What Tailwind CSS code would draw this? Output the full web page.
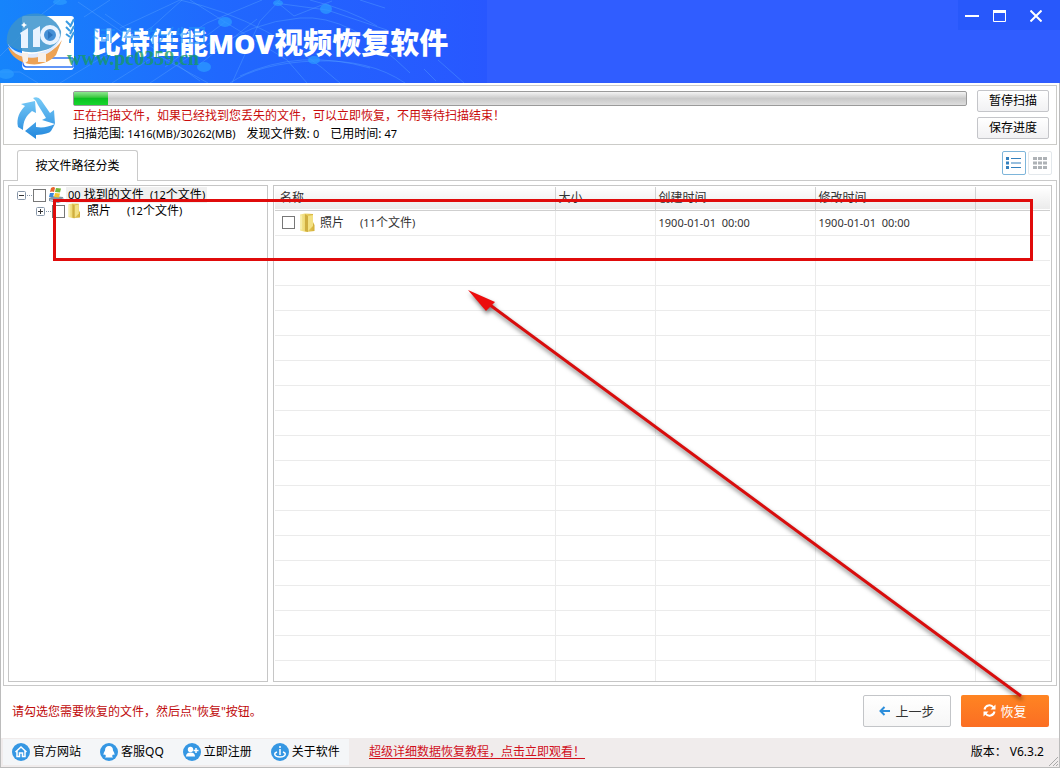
<!DOCTYPE html>
<html lang="zh-CN">
<head>
<meta charset="utf-8">
<title>比特佳能MOV视频恢复软件</title>
<script src="https://cdn.jsdelivr.net/npm/@tailwindcss/browser@4"></script>
</head>
<body class="relative flex h-screen flex-col overflow-hidden bg-white font-['Noto_Sans','Noto_Sans_CJK_SC',sans-serif] text-xs leading-4 text-black">

<svg class="absolute h-0 w-0" aria-hidden="true">
  <defs>
    <linearGradient id="gold" x1="0" x2="1"><stop offset="0" stop-color="#f6ea9c"/><stop offset=".4" stop-color="#ecd56b"/><stop offset="1" stop-color="#d3ae35"/></linearGradient>
    <linearGradient id="sky" gradientUnits="userSpaceOnUse" x1="0" y1="0" x2="0" y2="42"><stop offset="0" stop-color="#7accf7"/><stop offset="1" stop-color="#2287dd"/></linearGradient>
    <symbol id="folder" viewBox="0 0 16 20">
      <path d="M1 1.500 6 .5 14 1v8l1.500 3V18L7 19 1 17.500z" fill="url(#gold)"/>
      <path d="M6 1 9 3v16l-3-1z" fill="#cfae40"/><path d="M9 3l5-1v11l-5 5z" fill="#f3e184"/>
      <path d="M2 2.500v14" stroke="#fcf6c4"/>
    </symbol>
  </defs>
</svg>

<header class="relative flex h-[83px] shrink-0 items-start justify-between bg-[#305dff]">
  <div class="relative flex h-full w-[487px] items-center overflow-hidden bg-linear-to-r from-[#1684fb] via-[#2068fe] via-45% to-[#2857ff]">
    <svg class="absolute inset-0 h-full w-full" viewBox="0 0 487 83" fill="none" stroke="#5aa4ff" stroke-opacity=".4">
      <path d="M0 56 42 14 60 0M78 2l70 48 60 33M84 17l26-17M120 28l60-28M105 14l95 67M0 72h20l18 11M60 83l92-56 30-27M112 83l95-60L262 0M190 0l35 22-60 45M225 22l62 38 20 23M232 83l28-62 20-21M278 3l16 13M294 16l38-15M200 64l57-45M150 83l60-40M275 3l52 7 60 20"/>
      <path d="M180 0q90 20 160 83M230 83q30-20 85-22t90 22M210 52q40-30 90-34t110 55M310 0q40 10 67 26M424 69l12 12M438 60l26 23M385 8 360 0M240 76q60-28 130-8"/>
      <g fill="#2c9dff" fill-opacity=".7" stroke="none"><ellipse cx="60" cy="2" rx="7" ry="3"/><ellipse cx="225" cy="22" rx="7" ry="5"/><ellipse cx="326" cy="9" rx="6" ry="5"/><ellipse cx="204" cy="67" rx="7" ry="5"/><ellipse cx="6" cy="74" rx="8" ry="5"/><ellipse cx="314" cy="60" rx="6" ry="4"/><ellipse cx="278" cy="3" rx="5" ry="3"/></g>
    </svg>
    <svg class="relative ml-1 h-[60px] w-[76px] shrink-0" viewBox="4 11 76 60">
      <path d="M24 15h47q3 0 3 3v45q0 6-3 6H26q-4 0-4-6V18q0-3 2-3z" fill="#fff"/>
      <path d="M73 57H27q-4 0-4 4.500t4 4.500h46" fill="#fff" stroke="#2f74f5" stroke-width="1.500"/>
      <path d="M73 57v9" stroke="#2f74f5" stroke-width="1.500"/>
      <path d="M7 43a28 27 0 0 1 54-13q1 10-10 17-24 10-44-4z" fill="#3b93cc" fill-opacity=".85"/>
      <path d="M8 46a27 23 0 0 0 48 8l6-15c-10 17-38 22-54 7z" fill="#eda255"/>
      <path d="M7 40c3 16 42 20 54-5-6 26-48 30-54 5z" fill="#dfeaff"/>
      <path d="M20 32l8-5v20h-7V34zM33 29l7-4v21h-7z" fill="#e9f3ff"/>
      <circle cx="50" cy="34" r="8" fill="#4690d6" stroke="#e9f3ff" stroke-width="4"/><path d="M48 30l5 4-5 4z" fill="#2c72bb"/>
      <path d="M22 52h6v8l-4 3q-2-4-2-11zM38 52h8v9h-8z" fill="#f8efe8"/>
      <path d="m21 24 2-1 1-2 1 2 2 1-2 1-1 2-1-2z" fill="#fff"/>
      <path d="m66 20 4 4m4-6-4 8m-4 0 4 4m4-5-4 8m-4 0 4 3m4-5-4 8v3" stroke="#3a9be2" stroke-width="2" fill="none"/>
    </svg>
    <h1 class="relative ml-3 mt-1 whitespace-nowrap text-[29px] leading-9 font-black text-white">比特佳能<span class="text-[27px]">MOV</span>视频恢复软件</h1>
    <svg class="absolute top-[26px] left-[92px]" width="114" height="18" fill="none" stroke="#2193f8" stroke-opacity=".6" stroke-width="2" aria-hidden="true"><path d="M2 3l4 3M1 10l5 3M9 4h14M19 4v13M10 9h6v5h-6zM31 5h18M39 1l-6 10h15M40 8v9M56 5h9M60 1l-4 9h9M61 7v10M69 3l-2 6h8M71 8q0 6-5 9M81 1l-5 8M80 7v10M87 2l-2 6h10M90 1v16M98 2h14v15H98zM101 6h8M101 10h8"/></svg>
    <span class="absolute top-[46px] left-[67px] font-['Liberation_Serif',serif] text-[20px] leading-6 font-bold text-[#169a65]/80">www.pc0359.cn</span>
  </div>
  <div class="flex h-[30px] w-[102px] items-center bg-[#2858fb] pt-px">
    <button class="flex h-full w-[28px] items-center justify-center" aria-label="最小化"><svg width="14" height="14" stroke="#fff" stroke-width="2"><path d="M0 7h14"/></svg></button>
    <button class="flex h-full w-[27px] items-center justify-center" aria-label="最大化"><svg width="13" height="12" stroke="#fff" fill="none"><path d="M.5.5h12v11H.5z"/><path d="M0 1.500h13" stroke-width="3"/></svg></button>
    <button class="flex h-full w-[45px] items-center justify-center" aria-label="关闭"><svg width="12" height="12" stroke="#fff" stroke-width="2"><path d="m.5.500 11 11m0-11-11 11"/></svg></button>
  </div>
</header>

<main class="flex min-h-0 flex-1 flex-col border-x border-[#bcbcbc] px-[2px] pt-[2px]">
  <section class="flex h-[60px] shrink-0 items-start border border-[#cbcbc8] pr-[7px] pl-3">
    <svg class="mt-[11px] mr-[15px] h-[42px] w-[42px] shrink-0" viewBox="0 0 42 42" fill="url(#sky)">
      <path d="M5 7 19 4l1 12-4-2C10 19 7 24 7 33l-5-3C0 21 4 14 9 9z"/>
      <path d="M17 1q5-2 8 2l9 13 4-3 1 14-13-4 4-2-8-13q-2-5-5-7z"/>
      <path d="M9 34l11-9v5c7 1 12 0 19-3l-4 7q-2 3-15 4v4z"/>
    </svg>
    <div class="min-w-0 flex-1 pt-1">
      <div class="mt-px h-[15px] rounded-[2px] border border-[#9a9a9a] bg-linear-to-b from-[#f4f4f4] via-[#c9c9c9] via-50% to-[#dedede]" role="progressbar" aria-label="扫描进度" aria-valuenow="4" aria-valuemin="0" aria-valuemax="100">
        <div class="h-full bg-linear-to-b from-[#8be68f] via-[#0cc222] via-50% to-[#15d62c]" style="width:3.8%"></div>
      </div>
      <p class="mt-[2px] whitespace-nowrap text-[#c90c0c]">正在扫描文件，如果已经找到您丢失的文件，可以立即恢复，不用等待扫描结束！</p>
      <p class="mt-[2px] flex gap-[11px] whitespace-nowrap"><span>扫描范围: <span class="text-[11px]">1416(MB)/30262(MB)</span></span><span>发现文件数: <span class="text-[11px]">0</span></span><span>已用时间: <span class="text-[11px]">47</span></span></p>
    </div>
    <div class="ml-[10px] flex flex-col gap-[5px] pt-1">
      <button class="h-[22px] w-[72px] rounded-[2px] border border-[#c4c5c9] bg-linear-to-b from-white to-[#f1f1f3]">暂停扫描</button>
      <button class="h-[22px] w-[72px] rounded-[2px] border border-[#c4c5c9] bg-linear-to-b from-white to-[#f1f1f3]">保存进度</button>
    </div>
  </section>

  <div class="flex h-[35px] shrink-0 items-end justify-between pr-[5px] pl-[14px]">
    <button class="relative z-10 -mb-px h-[31px] w-[121px] rounded-t-[3px] border border-b-0 border-[#cacaca] bg-white">按文件路径分类</button>
    <div class="mb-[5px] flex gap-[2px]">
      <button aria-label="列表视图" class="flex h-6 w-6 items-center justify-center rounded-[2px] border border-[#7db5da] bg-white"><svg width="16" height="12" fill="#3380bd"><path d="M0 0h3v3H0zM0 4.500h3v3H0zM0 9h3v3H0zM5 1h10v1H5zM5 5.500h10v1H5zM5 10h10v1H5z"/></svg></button>
      <button aria-label="图标视图" class="flex h-6 w-6 items-center justify-center rounded-[2px] border border-[#e3e8ec] bg-white"><svg width="14" height="12" fill="#aeb2b6"><path d="M0 0h4v3H0zM5 0h4v3H5zM10 0h4v3h-4zM0 4.500h4v3H0zM5 4.500h4v3H5zM10 4.500h4v3h-4zM0 9h4v3H0zM5 9h4v3H5zM10 9h4v3h-4z"/></svg></button>
    </div>
  </div>

  <section class="flex min-h-0 flex-1 gap-[5px] border border-[#c9c9c9] px-1 pt-1 pb-[3px]">
    <ul class="w-[260px] shrink-0 border border-[#c6c6c6] pt-px pl-2">
      <li>
        <div class="flex h-4 items-center">
          <svg width="15" height="9" class="shrink-0" fill="none" stroke="#8796a8"><rect x=".5" y=".5" width="8" height="8" rx="1"/><path d="M2 4.500h5" stroke="#333"/><path d="M10 4.500h5" stroke-dasharray="1 1"/></svg>
          <input type="checkbox" id="all" class="ml-px h-[13px] w-[13px] shrink-0 appearance-none border border-[#777] bg-white">
          <svg class="ml-px h-4 w-[18px] shrink-0" viewBox="0 0 18 16"><path d="M2 11l5-2 9 1 1 4-6 2-9-2z" fill="#8395a6"/><path d="M3 13l7 1 6-2" stroke="#dce4ea" fill="none"/><path d="M4 1q3-2 4 0L7 5Q5 4 3 5z" fill="#e8632b"/><path d="m9 1 5 .5-1 4-5-.5z" fill="#76b739"/><path d="m3 6 4 0-1 4-4 0z" fill="#3b87d8"/><path d="m8 6 5 .5-1 4-5-.5z" fill="#f4c631"/></svg>
          <label for="all" class="ml-px whitespace-pre bg-[#f0f0f0] px-[2px]"><span class="text-[11px]">00</span> 找到的文件  <span class="text-[11px]">(12</span>个文件<span class="text-[11px]">)</span></label>
        </div>
        <ul class="pl-[19px]">
          <li class="flex h-4 items-center">
            <svg width="15" height="9" class="shrink-0" fill="none" stroke="#8796a8"><rect x=".5" y=".5" width="8" height="8" rx="1"/><path d="M2 4.500h5M4.500 2v5" stroke="#333"/><path d="M10 4.500h5" stroke-dasharray="1 1"/></svg>
            <input type="checkbox" id="photos" class="ml-px h-[13px] w-[13px] shrink-0 appearance-none border border-[#777] bg-white">
            <svg class="ml-[2px] h-4 w-[14px] shrink-0"><use href="#folder"/></svg>
            <label for="photos" class="ml-[6px] flex gap-4 whitespace-nowrap"><span>照片</span><span><span class="text-[11px]">(12</span>个文件<span class="text-[11px]">)</span></span></label>
          </li>
        </ul>
      </li>
    </ul>

    <div class="min-w-0 flex-1 overflow-hidden border border-[#c6c6c6] p-px">
      <table class="w-full table-fixed border-collapse text-[#333] [&_td]:h-[25px] [&_td]:border-r [&_td]:border-b [&_td]:border-[#ebebeb] [&_td]:p-0 [&_td]:pl-[3px] [&_td:last-child]:border-r-0">
        <colgroup><col class="w-[280px]"><col class="w-[100px]"><col class="w-[160px]"><col class="w-[160px]"><col></colgroup>
        <thead>
          <tr class="h-[23px] border-b border-[#cfcfcf] bg-linear-to-b from-white to-[#ebebeb] text-left">
            <th class="border-r border-[#d2d2d2] pl-[5px] font-normal">名称</th><th class="border-r border-[#d2d2d2] pl-[3px] font-normal">大小</th><th class="border-r border-[#d2d2d2] pl-[3px] font-normal">创建时间</th><th class="border-r border-[#d2d2d2] pl-[3px] font-normal">修改时间</th><th></th>
          </tr>
        </thead>
        <tbody>
          <tr><td><div class="flex items-center pl-1"><input type="checkbox" id="row1" class="h-[13px] w-[13px] shrink-0 appearance-none border border-[#777] bg-white"><svg class="ml-1 h-5 w-4 shrink-0"><use href="#folder"/></svg><label for="row1" class="ml-[5px] flex gap-4 whitespace-nowrap"><span>照片</span><span><span class="text-[11px]">(11</span>个文件<span class="text-[11px]">)</span></span></label></div></td><td></td><td class="whitespace-pre text-[11px]">1900-01-01  00:00</td><td class="whitespace-pre text-[11px]">1900-01-01  00:00</td><td></td></tr>
          <tr><td></td><td></td><td></td><td></td><td></td></tr>
          <tr><td></td><td></td><td></td><td></td><td></td></tr>
          <tr><td></td><td></td><td></td><td></td><td></td></tr>
          <tr><td></td><td></td><td></td><td></td><td></td></tr>
          <tr><td></td><td></td><td></td><td></td><td></td></tr>
          <tr><td></td><td></td><td></td><td></td><td></td></tr>
          <tr><td></td><td></td><td></td><td></td><td></td></tr>
          <tr><td></td><td></td><td></td><td></td><td></td></tr>
          <tr><td></td><td></td><td></td><td></td><td></td></tr>
          <tr><td></td><td></td><td></td><td></td><td></td></tr>
          <tr><td></td><td></td><td></td><td></td><td></td></tr>
          <tr><td></td><td></td><td></td><td></td><td></td></tr>
          <tr><td></td><td></td><td></td><td></td><td></td></tr>
          <tr><td></td><td></td><td></td><td></td><td></td></tr>
          <tr><td></td><td></td><td></td><td></td><td></td></tr>
          <tr><td></td><td></td><td></td><td></td><td></td></tr>
          <tr><td></td><td></td><td></td><td></td><td></td></tr>
          <tr><td></td><td></td><td></td><td></td><td></td></tr>
        </tbody>
      </table>
    </div>
  </section>

  <div class="flex h-[52px] shrink-0 items-center justify-between pr-2 pb-[3px] pl-[9px]">
    <p class="whitespace-nowrap pt-[2px] text-[#c00a0a]">请勾选您需要恢复的文件，然后点"恢复"按钮。</p>
    <div class="flex gap-[10px] leading-5">
      <button class="flex h-8 w-[88px] items-center justify-center gap-[5px] rounded-[2px] border border-[#c3c5c8] bg-linear-to-b from-white to-[#f6f6f6] text-[13px] text-[#333]"><svg width="11" height="10" fill="none" stroke="#2d8edb" stroke-width="2"><path d="M1 5h10M5.500 1l-4 4 4 4"/></svg>上一步</button>
      <button class="flex h-8 w-[88px] items-center justify-center gap-1 rounded-[2px] bg-linear-to-b from-[#ff8422] to-[#fb6e23] text-[13px] text-white"><svg width="13" height="13" viewBox="0 0 13 13" fill="none" stroke="#fff" stroke-width="2"><path d="M1.500 5.500a5 5 0 0 1 9-2M11.500 7.500a5 5 0 0 1-9 2"/><path d="M12.500.5v5h-5zM.5 12.500v-5h5z" fill="#fff" stroke="none"/></svg>恢复</button>
    </div>
  </div>
</main>

<footer class="relative flex h-[30px] shrink-0 items-center justify-between border border-t-0 border-[#bcbcbc] bg-[#f0ecec] pr-[15px] pb-px pl-[2px]">
  <div class="flex items-center">
    <nav class="flex h-[26px] w-[346px] items-center gap-[19px] bg-[#f4f6f8] pl-[9px] whitespace-nowrap">
      <a href="#" class="flex items-center gap-[3px]"><svg width="18" height="18" fill="none" stroke="#fff" stroke-width="1.500"><circle cx="9" cy="9" r="9" fill="#3597e3" stroke="none"/><path d="m3.500 9 5.500-5 5.500 5M5 8v5.500h2.500V10h3v3.500H13V8"/></svg>官方网站</a>
      <a href="#" class="flex items-center gap-[3px]"><svg width="18" height="18"><circle cx="9" cy="9" r="9" fill="#3597e3"/><path d="M9 3q4 0 4 4.500 2 3 1.500 4.500l-1.500-.5-1 1.500 1 1.500H5L6 13l-1-1.500-1.500.5Q3 10.500 5 7.500 5 3 9 3z" fill="#fff"/></svg>客服QQ</a>
      <a href="#" class="flex items-center gap-[3px]"><svg width="18" height="18"><circle cx="9" cy="9" r="9" fill="#3597e3"/><circle cx="7.500" cy="6.500" r="2.700" fill="#fff"/><path d="M3 13.500Q3 9.500 7.500 9.500t4.500 4z" fill="#fff"/><path d="M13 5v5m-2.500-2.500h5" stroke="#fff" stroke-width="1.500"/></svg>立即注册</a>
      <a href="#" class="flex items-center gap-[3px]"><svg width="18" height="18" fill="none" stroke="#fff" stroke-width="1.500"><circle cx="9" cy="9" r="9" fill="#3597e3" stroke="none"/><circle cx="9" cy="4" r="1" fill="#fff" stroke="none"/><path d="M9 6v6M6 9q-3 1-2 3t5 2 5-2-2-3"/></svg>关于软件</a>
    </nav>
    <a href="#" class="ml-5 whitespace-pre text-[#d0101c] underline underline-offset-2">超级详细数据恢复教程，点击立即观看！</a>
  </div>
  <p class="whitespace-nowrap">版本： V6.3.2</p>
  <svg class="absolute right-0 bottom-0" width="11" height="11" stroke="#aaa"><path d="m1 10 9-9M5 10l5-5M8 10l2-2"/></svg>
</footer>

<!-- guide marks laid over the window: highlighted rows and a pointer from the recover button -->
<div class="pointer-events-none absolute top-[199px] right-[27px] left-[53px] h-[62px] border-3 border-[#e00b0b]"></div>
<svg class="pointer-events-none absolute top-0 left-0 drop-shadow-[1px_3px_2px_rgba(0,0,0,0.5)]" width="1060" height="768">
  <path d="M486 302 1021 696" stroke="#d80d0d" stroke-width="3"/>
  <path d="m468 290 27 12-9 9z" fill="#ec0d0d"/>
</svg>
</body>
</html>
